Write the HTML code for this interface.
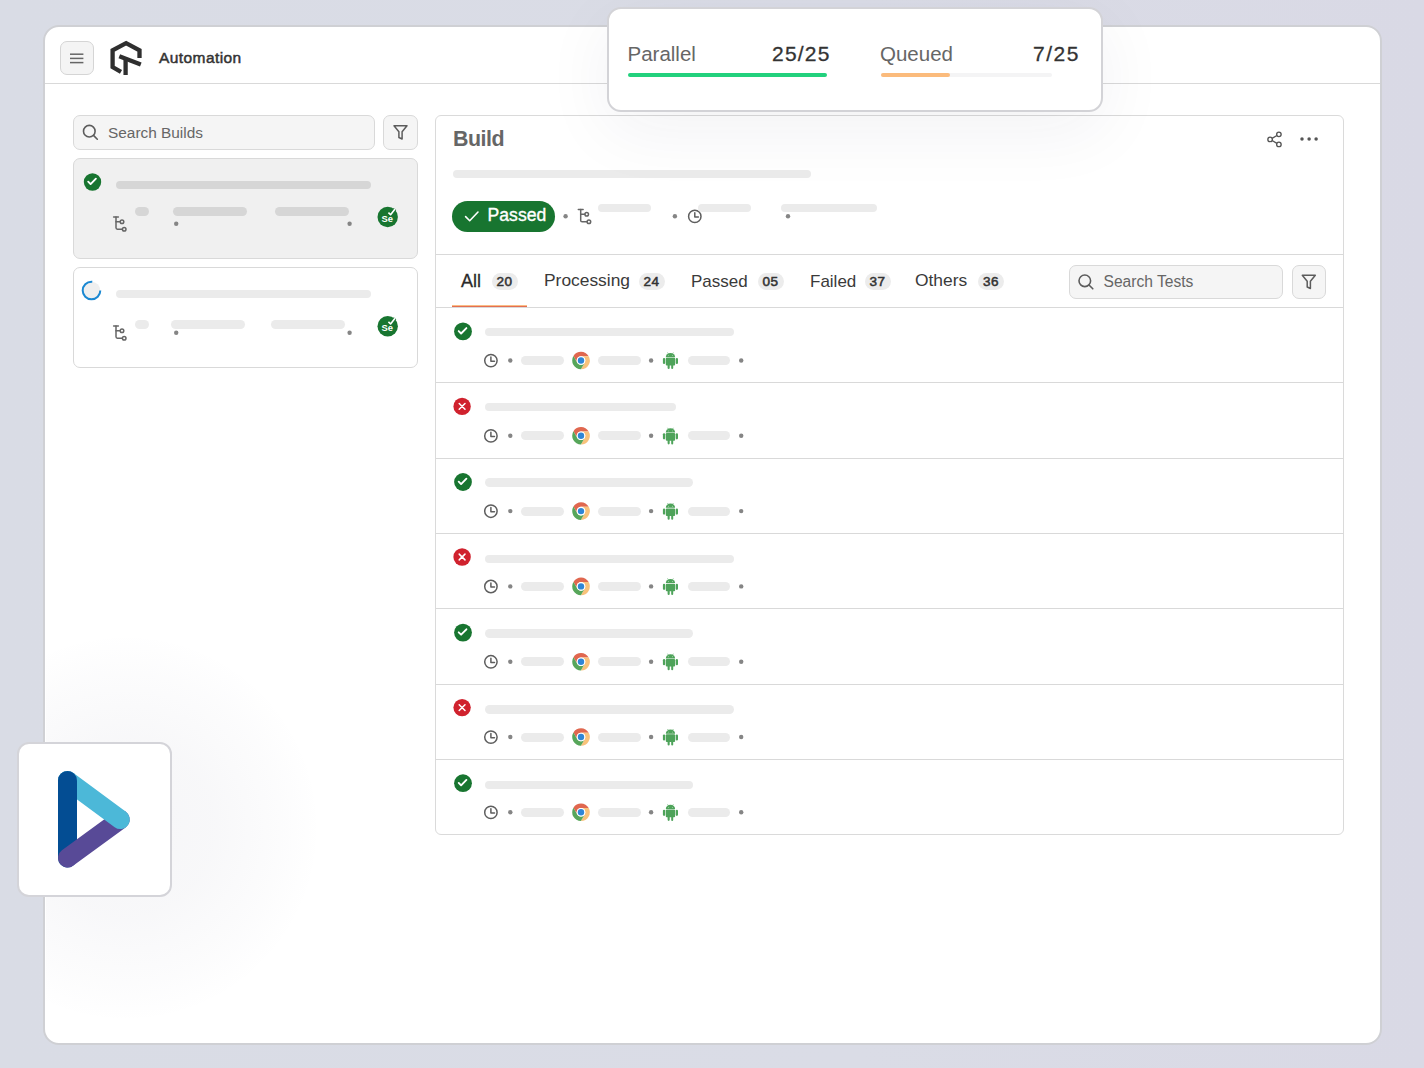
<!DOCTYPE html>
<html><head><meta charset="utf-8">
<style>
*{box-sizing:border-box;margin:0;padding:0}
html,body{width:1424px;height:1068px;overflow:hidden;background:linear-gradient(90deg,#d9dce5 0%,#dadce6 60%,#d9d9e5 100%);font-family:"Liberation Sans",sans-serif;position:relative}
.a{position:absolute}
.t{position:absolute;line-height:1;white-space:nowrap}
.win{left:43px;top:25px;width:1339px;height:1020px;background:#fff;border:2px solid #cfd0d4;border-radius:16px}
.sk{position:absolute;background:#ebebeb;border-radius:5px;height:9px}
.dot{position:absolute;width:4.4px;height:4.4px;border-radius:50%;background:#858585}
.hl{position:absolute;height:1px;background:#d9d9d9}
svg{position:absolute;overflow:visible}
.badge{position:absolute;height:17px;border-radius:9px;background:#ececec;font-size:13.5px;font-weight:400;-webkit-text-stroke:0.55px #333;color:#333;line-height:17px;text-align:center;letter-spacing:0.5px}
</style></head><body>
<div class="a win"></div>
<div class="hl" style="left:45px;top:83px;width:1335px;background:#d9d9d9"></div>
<div class="a" style="left:60px;top:41px;width:34px;height:34px;background:#f4f4f4;border:1px solid #d5d5d5;border-radius:7px"></div>
<svg style="left:0;top:0" width="1" height="1"><g stroke="#666" stroke-width="1.5"><line x1="70" y1="54.2" x2="83.4" y2="54.2"/><line x1="70" y1="58.4" x2="83.4" y2="58.4"/><line x1="70" y1="62.6" x2="83.4" y2="62.6"/></g></svg>
<svg style="left:0;top:0" width="1" height="1"><g fill="none" stroke="#2f2f2f" stroke-width="4.3" stroke-linejoin="miter" stroke-linecap="butt">
<polyline points="121,71.8 112.6,67 112.6,50.3 126.1,43.2 139.5,50.3 139.5,58"/>
<line x1="119.3" y1="56.2" x2="140.8" y2="64.6"/>
<line x1="125.6" y1="58" x2="125.6" y2="75"/></g></svg>
<div class="t" style="left:159px;top:50px;font-size:15.5px;color:#333;letter-spacing:0.42px;-webkit-text-stroke:0.5px #333">Automation</div>
<div class="a" style="left:73px;top:115px;width:302px;height:35px;background:#f5f5f5;border:1px solid #d9d9d9;border-radius:7px"></div>
<svg style="left:0;top:0" width="1" height="1"><g fill="none" stroke="#5c5c5c" stroke-width="1.6"><circle cx="89.3" cy="131.2" r="5.8"/><line x1="93.5" y1="135.4" x2="97.3" y2="139.2" stroke-linecap="round"/></g></svg>
<div class="t" style="left:108px;top:124.5px;font-size:15.4px;color:#666">Search Builds</div>
<div class="a" style="left:383px;top:115px;width:35px;height:35px;background:#f5f5f5;border:1px solid #d9d9d9;border-radius:7px"></div>
<svg style="left:0;top:0" width="1" height="1"><path d="M394,125.8 H407 L402.1,131.8 V139 L398.9,137.5 V131.8 Z" fill="none" stroke="#5c5c5c" stroke-width="1.5" stroke-linejoin="round"/></svg>
<div class="a" style="left:73px;top:158px;width:345px;height:101px;background:#f0f0f0;border:1px solid #d9d9d9;border-radius:7px"></div>
<svg style="left:0;top:0" width="1" height="1"><circle cx="92.5" cy="182" r="8.7" fill="#187530"/><path d="M88.20,181.70 L90.60,184.10 L95.90,178.70" fill="none" stroke="#fff" stroke-width="1.9" stroke-linecap="round" stroke-linejoin="round"/></svg>
<div class="sk" style="left:116px;top:181px;width:255px;height:8px;background:#d6d6d6"></div>
<svg style="left:0;top:0" width="1" height="1"><g fill="none" stroke="#666" stroke-width="1.5" stroke-linecap="round"><path d="M113.60,217.00 H118.40"/><path d="M116.00,217.00 V227.80 Q116.00,229.20 117.40,229.20 H122.40"/><path d="M116.00,221.70 H120.20"/><circle cx="122.00" cy="221.70" r="1.8"/><circle cx="124.20" cy="229.20" r="1.8"/></g></svg>
<div class="sk" style="left:135px;top:207px;width:14px;height:9px;background:#d6d6d6"></div>
<div class="sk" style="left:173px;top:207px;width:74px;height:9px;background:#d6d6d6"></div>
<div class="sk" style="left:275px;top:207px;width:74px;height:9px;background:#d6d6d6"></div>
<svg style="left:0;top:0" width="1" height="1"><circle cx="176.20" cy="223.70" r="2.2" fill="#858585"/></svg>
<svg style="left:0;top:0" width="1" height="1"><circle cx="349.60" cy="223.70" r="2.2" fill="#858585"/></svg>
<svg style="left:0;top:0" width="1" height="1"><circle cx="387.7" cy="217" r="10.2" fill="#187530"/>
<text x="387.20" y="221.50" font-family="Liberation Sans" font-weight="700" font-size="9.4" fill="#fff" text-anchor="middle">Se</text><path d="M388.40,212.60 L390.60,214.70 L395.00,209.00" fill="none" stroke="#187530" stroke-width="3.2" stroke-linejoin="round"/><path d="M388.40,212.60 L390.60,214.70 L395.00,209.00" fill="none" stroke="#fff" stroke-width="1.6" stroke-linejoin="round"/></svg>
<div class="a" style="left:73px;top:267px;width:345px;height:101px;background:#fff;border:1px solid #d9d9d9;border-radius:7px"></div>
<svg style="left:0;top:0" width="1" height="1"><circle cx="91.5" cy="290.5" r="8.8" fill="#efefef"/><circle cx="91.5" cy="290.5" r="8.8" fill="none" stroke="#1a88d2" stroke-width="2" stroke-dasharray="42 13.3" transform="rotate(0 91.5 290.5)"/></svg>
<div class="sk" style="left:116px;top:290px;width:255px;height:8px;background:#ebebeb"></div>
<svg style="left:0;top:0" width="1" height="1"><g fill="none" stroke="#666" stroke-width="1.5" stroke-linecap="round"><path d="M113.60,326.00 H118.40"/><path d="M116.00,326.00 V336.80 Q116.00,338.20 117.40,338.20 H122.40"/><path d="M116.00,330.70 H120.20"/><circle cx="122.00" cy="330.70" r="1.8"/><circle cx="124.20" cy="338.20" r="1.8"/></g></svg>
<div class="sk" style="left:135px;top:320px;width:14px;height:9px;background:#ebebeb"></div>
<div class="sk" style="left:171px;top:320px;width:74px;height:9px;background:#ebebeb"></div>
<div class="sk" style="left:271px;top:320px;width:74px;height:9px;background:#ebebeb"></div>
<svg style="left:0;top:0" width="1" height="1"><circle cx="176.20" cy="332.70" r="2.2" fill="#858585"/></svg>
<svg style="left:0;top:0" width="1" height="1"><circle cx="349.60" cy="332.70" r="2.2" fill="#858585"/></svg>
<svg style="left:0;top:0" width="1" height="1"><circle cx="387.7" cy="326.2" r="10.2" fill="#187530"/>
<text x="387.20" y="330.70" font-family="Liberation Sans" font-weight="700" font-size="9.4" fill="#fff" text-anchor="middle">Se</text><path d="M388.40,321.80 L390.60,323.90 L395.00,318.20" fill="none" stroke="#187530" stroke-width="3.2" stroke-linejoin="round"/><path d="M388.40,321.80 L390.60,323.90 L395.00,318.20" fill="none" stroke="#fff" stroke-width="1.6" stroke-linejoin="round"/></svg>
<div class="a" style="left:435px;top:115px;width:909px;height:720px;background:#fff;border:1px solid #dadada;border-radius:6px"></div>
<div class="t" style="left:453px;top:129px;font-size:21.4px;font-weight:700;color:#666;letter-spacing:-0.45px">Build</div>
<svg style="left:0;top:0" width="1" height="1"><g fill="none" stroke="#555" stroke-width="1.35"><circle cx="1278.9" cy="134.3" r="2.25"/><circle cx="1278.9" cy="144.4" r="2.25"/><circle cx="1270.1" cy="139.4" r="2.25"/><line x1="1272.1" y1="138.3" x2="1276.9" y2="135.5"/><line x1="1272.1" y1="140.5" x2="1276.9" y2="143.3"/></g>
<circle cx="1302" cy="138.9" r="1.75" fill="#555"/><circle cx="1309.1" cy="138.9" r="1.75" fill="#555"/><circle cx="1316.1" cy="138.9" r="1.75" fill="#555"/></svg>
<div class="sk" style="left:453px;top:169.8px;width:358px;height:8px"></div>
<div class="a" style="left:452px;top:201px;width:103px;height:31px;border-radius:16px;background:#187530"></div>
<svg style="left:0;top:0" width="1" height="1"><path d="M465.6,216.6 L469.7,220.7 L478,212" fill="none" stroke="#fff" stroke-width="1.6" stroke-linecap="round" stroke-linejoin="round"/></svg>
<div class="t" style="left:487.6px;top:206.8px;font-size:17.6px;color:#fff;-webkit-text-stroke:0.35px #fff">Passed</div>
<svg style="left:0;top:0" width="1" height="1"><circle cx="565.60" cy="216.30" r="2.2" fill="#858585"/></svg>
<svg style="left:0;top:0" width="1" height="1"><g fill="none" stroke="#666" stroke-width="1.5" stroke-linecap="round"><path d="M578.30,209.60 H583.10"/><path d="M580.70,209.60 V220.40 Q580.70,221.80 582.10,221.80 H587.10"/><path d="M580.70,214.30 H584.90"/><circle cx="586.70" cy="214.30" r="1.8"/><circle cx="588.90" cy="221.80" r="1.8"/></g></svg>
<div class="sk" style="left:598px;top:204px;width:53px;height:8px"></div>
<svg style="left:0;top:0" width="1" height="1"><circle cx="674.90" cy="216.30" r="2.2" fill="#858585"/></svg>
<svg style="left:0;top:0" width="1" height="1"><g fill="none" stroke="#5e5e5e" stroke-width="1.5"><circle cx="694.8" cy="216.4" r="6.2"/><path d="M694.80,212.80 V217.00 H698.40" stroke-linecap="round" stroke-linejoin="round"/></g></svg>
<div class="sk" style="left:698px;top:204px;width:53px;height:8px"></div>
<div class="sk" style="left:781px;top:204px;width:96px;height:8px"></div>
<svg style="left:0;top:0" width="1" height="1"><circle cx="788.00" cy="216.30" r="2.2" fill="#858585"/></svg>
<div class="hl" style="left:436px;top:254px;width:907px"></div>
<div class="t" style="left:461px;top:271.86px;font-size:18px;color:#2b2b2b;-webkit-text-stroke:0.3px #2b2b2b">All</div>
<div class="badge" style="left:491.5px;top:273px;width:26px">20</div>
<div class="t" style="left:544px;top:272.37px;font-size:17.4px;color:#3a3a3a;">Processing</div>
<div class="badge" style="left:638.5px;top:273px;width:26px">24</div>
<div class="t" style="left:691px;top:272.71px;font-size:17px;color:#3a3a3a;">Passed</div>
<div class="badge" style="left:757.5px;top:273px;width:26px">05</div>
<div class="t" style="left:810px;top:272.71px;font-size:17px;color:#3a3a3a;">Failed</div>
<div class="badge" style="left:864.5px;top:273px;width:26px">37</div>
<div class="t" style="left:915px;top:272.37px;font-size:17.4px;color:#3a3a3a;">Others</div>
<div class="badge" style="left:978px;top:273px;width:26px">36</div>
<div class="a" style="left:452px;top:305px;width:74.5px;height:1px;background:#f9bd86"></div>
<div class="a" style="left:452px;top:306px;width:74.5px;height:1px;background:#e56e50"></div>
<div class="hl" style="left:436px;top:307px;width:907px"></div>
<div class="a" style="left:1069px;top:265px;width:214px;height:34px;background:#f5f5f5;border:1px solid #d9d9d9;border-radius:7px"></div>
<svg style="left:0;top:0" width="1" height="1"><g fill="none" stroke="#5c5c5c" stroke-width="1.6"><circle cx="1084.8" cy="280.8" r="5.8"/><line x1="1089" y1="285" x2="1092.8" y2="288.8" stroke-linecap="round"/></g></svg>
<div class="t" style="left:1103.5px;top:274px;font-size:15.6px;color:#666">Search Tests</div>
<div class="a" style="left:1292px;top:265px;width:34px;height:34px;background:#f5f5f5;border:1px solid #d9d9d9;border-radius:7px"></div>
<svg style="left:0;top:0" width="1" height="1"><path d="M1302.3,275.3 H1315.3 L1310.4,281.3 V288.5 L1307.2,287 V281.3 Z" fill="none" stroke="#5c5c5c" stroke-width="1.5" stroke-linejoin="round"/></svg>
<svg style="left:0;top:0" width="1" height="1"><circle cx="463" cy="331.4" r="8.9" fill="#187530"/><path d="M458.70,331.10 L461.10,333.50 L466.40,328.10" fill="none" stroke="#fff" stroke-width="1.9" stroke-linecap="round" stroke-linejoin="round"/></svg>
<div class="sk" style="left:485.3px;top:327.5px;width:249px;height:8.5px"></div>
<svg style="left:0;top:0" width="1" height="1"><g fill="none" stroke="#5e5e5e" stroke-width="1.5"><circle cx="490.9" cy="360.6" r="6.2"/><path d="M490.90,357.00 V361.20 H494.50" stroke-linecap="round" stroke-linejoin="round"/></g></svg>
<svg style="left:0;top:0" width="1" height="1"><circle cx="510.30" cy="360.50" r="2.2" fill="#858585"/></svg>
<div class="sk" style="left:521px;top:356.0px;width:43px;height:9px"></div>
<svg style="left:0;top:0" width="1" height="1"><path d="M573.44,356.00 A8.8,8.8 0 0 1 588.68,356.20 L581.00,356.20 A4.3,4.3 0 0 0 577.28,362.65 Z" fill="#e0674f"/><path d="M588.68,356.20 A8.8,8.8 0 0 1 580.88,369.30 L584.72,362.65 A4.3,4.3 0 0 0 581.00,356.20 Z" fill="#f8c27b"/><path d="M580.88,369.30 A8.8,8.8 0 0 1 573.44,356.00 L577.28,362.65 A4.3,4.3 0 0 0 584.72,362.65 Z" fill="#57a65a"/><circle cx="581" cy="360.5" r="4.3" fill="#fff"/><circle cx="581" cy="360.5" r="3.2" fill="#2f86d6"/></svg>
<div class="sk" style="left:598px;top:356.0px;width:43px;height:9px"></div>
<svg style="left:0;top:0" width="1" height="1"><circle cx="651.10" cy="360.50" r="2.2" fill="#858585"/></svg>
<svg style="left:0;top:0" width="1" height="1"><g fill="#4ea35a"><path d="M665.80,357.20 A4.65,4.2 0 0 1 675.10,357.20 Z"/>
<rect x="665.80" y="357.80" width="9.3" height="7.6" rx="1"/>
<rect x="662.90" y="357.90" width="2.3" height="6.2" rx="1.15"/>
<rect x="675.70" y="357.90" width="2.3" height="6.2" rx="1.15"/>
<rect x="667.60" y="363.50" width="2.1" height="5.6" rx="1.05"/>
<rect x="671.20" y="363.50" width="2.0" height="5.6" rx="1.0"/></g>
<g stroke="#4ea35a" stroke-width="0.6"><line x1="668.30" y1="353.80" x2="667.50" y2="352.50"/><line x1="672.60" y1="353.80" x2="673.40" y2="352.50"/></g>
<circle cx="668.50" cy="355.60" r="0.45" fill="#dff0df"/><circle cx="672.40" cy="355.60" r="0.45" fill="#dff0df"/></svg>
<div class="sk" style="left:688px;top:356.0px;width:42px;height:9px"></div>
<svg style="left:0;top:0" width="1" height="1"><circle cx="741.20" cy="360.50" r="2.2" fill="#858585"/></svg>
<div class="hl" style="left:436px;top:382.3px;width:907px"></div>
<svg style="left:0;top:0" width="1" height="1"><circle cx="462.1" cy="406.40000000000003" r="8.7" fill="#d0222e"/><path d="M459.20,403.50 L465.00,409.30 M465.00,403.50 L459.20,409.30" fill="none" stroke="#fff" stroke-width="1.5" stroke-linecap="round"/></svg>
<div class="sk" style="left:485.3px;top:402.8px;width:191px;height:8.5px"></div>
<svg style="left:0;top:0" width="1" height="1"><g fill="none" stroke="#5e5e5e" stroke-width="1.5"><circle cx="490.9" cy="435.90000000000003" r="6.2"/><path d="M490.90,432.30 V436.50 H494.50" stroke-linecap="round" stroke-linejoin="round"/></g></svg>
<svg style="left:0;top:0" width="1" height="1"><circle cx="510.30" cy="435.80" r="2.2" fill="#858585"/></svg>
<div class="sk" style="left:521px;top:431.3px;width:43px;height:9px"></div>
<svg style="left:0;top:0" width="1" height="1"><path d="M573.44,431.30 A8.8,8.8 0 0 1 588.68,431.50 L581.00,431.50 A4.3,4.3 0 0 0 577.28,437.95 Z" fill="#e0674f"/><path d="M588.68,431.50 A8.8,8.8 0 0 1 580.88,444.60 L584.72,437.95 A4.3,4.3 0 0 0 581.00,431.50 Z" fill="#f8c27b"/><path d="M580.88,444.60 A8.8,8.8 0 0 1 573.44,431.30 L577.28,437.95 A4.3,4.3 0 0 0 584.72,437.95 Z" fill="#57a65a"/><circle cx="581" cy="435.8" r="4.3" fill="#fff"/><circle cx="581" cy="435.8" r="3.2" fill="#2f86d6"/></svg>
<div class="sk" style="left:598px;top:431.3px;width:43px;height:9px"></div>
<svg style="left:0;top:0" width="1" height="1"><circle cx="651.10" cy="435.80" r="2.2" fill="#858585"/></svg>
<svg style="left:0;top:0" width="1" height="1"><g fill="#4ea35a"><path d="M665.80,432.50 A4.65,4.2 0 0 1 675.10,432.50 Z"/>
<rect x="665.80" y="433.10" width="9.3" height="7.6" rx="1"/>
<rect x="662.90" y="433.20" width="2.3" height="6.2" rx="1.15"/>
<rect x="675.70" y="433.20" width="2.3" height="6.2" rx="1.15"/>
<rect x="667.60" y="438.80" width="2.1" height="5.6" rx="1.05"/>
<rect x="671.20" y="438.80" width="2.0" height="5.6" rx="1.0"/></g>
<g stroke="#4ea35a" stroke-width="0.6"><line x1="668.30" y1="429.10" x2="667.50" y2="427.80"/><line x1="672.60" y1="429.10" x2="673.40" y2="427.80"/></g>
<circle cx="668.50" cy="430.90" r="0.45" fill="#dff0df"/><circle cx="672.40" cy="430.90" r="0.45" fill="#dff0df"/></svg>
<div class="sk" style="left:688px;top:431.3px;width:42px;height:9px"></div>
<svg style="left:0;top:0" width="1" height="1"><circle cx="741.20" cy="435.80" r="2.2" fill="#858585"/></svg>
<div class="hl" style="left:436px;top:457.6px;width:907px"></div>
<svg style="left:0;top:0" width="1" height="1"><circle cx="463" cy="482.0" r="8.9" fill="#187530"/><path d="M458.70,481.70 L461.10,484.10 L466.40,478.70" fill="none" stroke="#fff" stroke-width="1.9" stroke-linecap="round" stroke-linejoin="round"/></svg>
<div class="sk" style="left:485.3px;top:478.1px;width:208px;height:8.5px"></div>
<svg style="left:0;top:0" width="1" height="1"><g fill="none" stroke="#5e5e5e" stroke-width="1.5"><circle cx="490.9" cy="511.20000000000005" r="6.2"/><path d="M490.90,507.60 V511.80 H494.50" stroke-linecap="round" stroke-linejoin="round"/></g></svg>
<svg style="left:0;top:0" width="1" height="1"><circle cx="510.30" cy="511.10" r="2.2" fill="#858585"/></svg>
<div class="sk" style="left:521px;top:506.6px;width:43px;height:9px"></div>
<svg style="left:0;top:0" width="1" height="1"><path d="M573.44,506.60 A8.8,8.8 0 0 1 588.68,506.80 L581.00,506.80 A4.3,4.3 0 0 0 577.28,513.25 Z" fill="#e0674f"/><path d="M588.68,506.80 A8.8,8.8 0 0 1 580.88,519.90 L584.72,513.25 A4.3,4.3 0 0 0 581.00,506.80 Z" fill="#f8c27b"/><path d="M580.88,519.90 A8.8,8.8 0 0 1 573.44,506.60 L577.28,513.25 A4.3,4.3 0 0 0 584.72,513.25 Z" fill="#57a65a"/><circle cx="581" cy="511.1" r="4.3" fill="#fff"/><circle cx="581" cy="511.1" r="3.2" fill="#2f86d6"/></svg>
<div class="sk" style="left:598px;top:506.6px;width:43px;height:9px"></div>
<svg style="left:0;top:0" width="1" height="1"><circle cx="651.10" cy="511.10" r="2.2" fill="#858585"/></svg>
<svg style="left:0;top:0" width="1" height="1"><g fill="#4ea35a"><path d="M665.80,507.80 A4.65,4.2 0 0 1 675.10,507.80 Z"/>
<rect x="665.80" y="508.40" width="9.3" height="7.6" rx="1"/>
<rect x="662.90" y="508.50" width="2.3" height="6.2" rx="1.15"/>
<rect x="675.70" y="508.50" width="2.3" height="6.2" rx="1.15"/>
<rect x="667.60" y="514.10" width="2.1" height="5.6" rx="1.05"/>
<rect x="671.20" y="514.10" width="2.0" height="5.6" rx="1.0"/></g>
<g stroke="#4ea35a" stroke-width="0.6"><line x1="668.30" y1="504.40" x2="667.50" y2="503.10"/><line x1="672.60" y1="504.40" x2="673.40" y2="503.10"/></g>
<circle cx="668.50" cy="506.20" r="0.45" fill="#dff0df"/><circle cx="672.40" cy="506.20" r="0.45" fill="#dff0df"/></svg>
<div class="sk" style="left:688px;top:506.6px;width:42px;height:9px"></div>
<svg style="left:0;top:0" width="1" height="1"><circle cx="741.20" cy="511.10" r="2.2" fill="#858585"/></svg>
<div class="hl" style="left:436px;top:532.9px;width:907px"></div>
<svg style="left:0;top:0" width="1" height="1"><circle cx="462.1" cy="557.0" r="8.7" fill="#d0222e"/><path d="M459.20,554.10 L465.00,559.90 M465.00,554.10 L459.20,559.90" fill="none" stroke="#fff" stroke-width="1.5" stroke-linecap="round"/></svg>
<div class="sk" style="left:485.3px;top:554.7px;width:249px;height:8.5px"></div>
<svg style="left:0;top:0" width="1" height="1"><g fill="none" stroke="#5e5e5e" stroke-width="1.5"><circle cx="490.9" cy="586.5" r="6.2"/><path d="M490.90,582.90 V587.10 H494.50" stroke-linecap="round" stroke-linejoin="round"/></g></svg>
<svg style="left:0;top:0" width="1" height="1"><circle cx="510.30" cy="586.40" r="2.2" fill="#858585"/></svg>
<div class="sk" style="left:521px;top:581.9px;width:43px;height:9px"></div>
<svg style="left:0;top:0" width="1" height="1"><path d="M573.44,581.90 A8.8,8.8 0 0 1 588.68,582.10 L581.00,582.10 A4.3,4.3 0 0 0 577.28,588.55 Z" fill="#e0674f"/><path d="M588.68,582.10 A8.8,8.8 0 0 1 580.88,595.20 L584.72,588.55 A4.3,4.3 0 0 0 581.00,582.10 Z" fill="#f8c27b"/><path d="M580.88,595.20 A8.8,8.8 0 0 1 573.44,581.90 L577.28,588.55 A4.3,4.3 0 0 0 584.72,588.55 Z" fill="#57a65a"/><circle cx="581" cy="586.4" r="4.3" fill="#fff"/><circle cx="581" cy="586.4" r="3.2" fill="#2f86d6"/></svg>
<div class="sk" style="left:598px;top:581.9px;width:43px;height:9px"></div>
<svg style="left:0;top:0" width="1" height="1"><circle cx="651.10" cy="586.40" r="2.2" fill="#858585"/></svg>
<svg style="left:0;top:0" width="1" height="1"><g fill="#4ea35a"><path d="M665.80,583.10 A4.65,4.2 0 0 1 675.10,583.10 Z"/>
<rect x="665.80" y="583.70" width="9.3" height="7.6" rx="1"/>
<rect x="662.90" y="583.80" width="2.3" height="6.2" rx="1.15"/>
<rect x="675.70" y="583.80" width="2.3" height="6.2" rx="1.15"/>
<rect x="667.60" y="589.40" width="2.1" height="5.6" rx="1.05"/>
<rect x="671.20" y="589.40" width="2.0" height="5.6" rx="1.0"/></g>
<g stroke="#4ea35a" stroke-width="0.6"><line x1="668.30" y1="579.70" x2="667.50" y2="578.40"/><line x1="672.60" y1="579.70" x2="673.40" y2="578.40"/></g>
<circle cx="668.50" cy="581.50" r="0.45" fill="#dff0df"/><circle cx="672.40" cy="581.50" r="0.45" fill="#dff0df"/></svg>
<div class="sk" style="left:688px;top:581.9px;width:42px;height:9px"></div>
<svg style="left:0;top:0" width="1" height="1"><circle cx="741.20" cy="586.40" r="2.2" fill="#858585"/></svg>
<div class="hl" style="left:436px;top:608.2px;width:907px"></div>
<svg style="left:0;top:0" width="1" height="1"><circle cx="463" cy="632.6" r="8.9" fill="#187530"/><path d="M458.70,632.30 L461.10,634.70 L466.40,629.30" fill="none" stroke="#fff" stroke-width="1.9" stroke-linecap="round" stroke-linejoin="round"/></svg>
<div class="sk" style="left:485.3px;top:629.3px;width:208px;height:8.5px"></div>
<svg style="left:0;top:0" width="1" height="1"><g fill="none" stroke="#5e5e5e" stroke-width="1.5"><circle cx="490.9" cy="661.8000000000001" r="6.2"/><path d="M490.90,658.20 V662.40 H494.50" stroke-linecap="round" stroke-linejoin="round"/></g></svg>
<svg style="left:0;top:0" width="1" height="1"><circle cx="510.30" cy="661.70" r="2.2" fill="#858585"/></svg>
<div class="sk" style="left:521px;top:657.2px;width:43px;height:9px"></div>
<svg style="left:0;top:0" width="1" height="1"><path d="M573.44,657.20 A8.8,8.8 0 0 1 588.68,657.40 L581.00,657.40 A4.3,4.3 0 0 0 577.28,663.85 Z" fill="#e0674f"/><path d="M588.68,657.40 A8.8,8.8 0 0 1 580.88,670.50 L584.72,663.85 A4.3,4.3 0 0 0 581.00,657.40 Z" fill="#f8c27b"/><path d="M580.88,670.50 A8.8,8.8 0 0 1 573.44,657.20 L577.28,663.85 A4.3,4.3 0 0 0 584.72,663.85 Z" fill="#57a65a"/><circle cx="581" cy="661.7" r="4.3" fill="#fff"/><circle cx="581" cy="661.7" r="3.2" fill="#2f86d6"/></svg>
<div class="sk" style="left:598px;top:657.2px;width:43px;height:9px"></div>
<svg style="left:0;top:0" width="1" height="1"><circle cx="651.10" cy="661.70" r="2.2" fill="#858585"/></svg>
<svg style="left:0;top:0" width="1" height="1"><g fill="#4ea35a"><path d="M665.80,658.40 A4.65,4.2 0 0 1 675.10,658.40 Z"/>
<rect x="665.80" y="659.00" width="9.3" height="7.6" rx="1"/>
<rect x="662.90" y="659.10" width="2.3" height="6.2" rx="1.15"/>
<rect x="675.70" y="659.10" width="2.3" height="6.2" rx="1.15"/>
<rect x="667.60" y="664.70" width="2.1" height="5.6" rx="1.05"/>
<rect x="671.20" y="664.70" width="2.0" height="5.6" rx="1.0"/></g>
<g stroke="#4ea35a" stroke-width="0.6"><line x1="668.30" y1="655.00" x2="667.50" y2="653.70"/><line x1="672.60" y1="655.00" x2="673.40" y2="653.70"/></g>
<circle cx="668.50" cy="656.80" r="0.45" fill="#dff0df"/><circle cx="672.40" cy="656.80" r="0.45" fill="#dff0df"/></svg>
<div class="sk" style="left:688px;top:657.2px;width:42px;height:9px"></div>
<svg style="left:0;top:0" width="1" height="1"><circle cx="741.20" cy="661.70" r="2.2" fill="#858585"/></svg>
<div class="hl" style="left:436px;top:683.5px;width:907px"></div>
<svg style="left:0;top:0" width="1" height="1"><circle cx="462.1" cy="707.6" r="8.7" fill="#d0222e"/><path d="M459.20,704.70 L465.00,710.50 M465.00,704.70 L459.20,710.50" fill="none" stroke="#fff" stroke-width="1.5" stroke-linecap="round"/></svg>
<div class="sk" style="left:485.3px;top:705.3px;width:249px;height:8.5px"></div>
<svg style="left:0;top:0" width="1" height="1"><g fill="none" stroke="#5e5e5e" stroke-width="1.5"><circle cx="490.9" cy="737.1" r="6.2"/><path d="M490.90,733.50 V737.70 H494.50" stroke-linecap="round" stroke-linejoin="round"/></g></svg>
<svg style="left:0;top:0" width="1" height="1"><circle cx="510.30" cy="737.00" r="2.2" fill="#858585"/></svg>
<div class="sk" style="left:521px;top:732.5px;width:43px;height:9px"></div>
<svg style="left:0;top:0" width="1" height="1"><path d="M573.44,732.50 A8.8,8.8 0 0 1 588.68,732.70 L581.00,732.70 A4.3,4.3 0 0 0 577.28,739.15 Z" fill="#e0674f"/><path d="M588.68,732.70 A8.8,8.8 0 0 1 580.88,745.80 L584.72,739.15 A4.3,4.3 0 0 0 581.00,732.70 Z" fill="#f8c27b"/><path d="M580.88,745.80 A8.8,8.8 0 0 1 573.44,732.50 L577.28,739.15 A4.3,4.3 0 0 0 584.72,739.15 Z" fill="#57a65a"/><circle cx="581" cy="737.0" r="4.3" fill="#fff"/><circle cx="581" cy="737.0" r="3.2" fill="#2f86d6"/></svg>
<div class="sk" style="left:598px;top:732.5px;width:43px;height:9px"></div>
<svg style="left:0;top:0" width="1" height="1"><circle cx="651.10" cy="737.00" r="2.2" fill="#858585"/></svg>
<svg style="left:0;top:0" width="1" height="1"><g fill="#4ea35a"><path d="M665.80,733.70 A4.65,4.2 0 0 1 675.10,733.70 Z"/>
<rect x="665.80" y="734.30" width="9.3" height="7.6" rx="1"/>
<rect x="662.90" y="734.40" width="2.3" height="6.2" rx="1.15"/>
<rect x="675.70" y="734.40" width="2.3" height="6.2" rx="1.15"/>
<rect x="667.60" y="740.00" width="2.1" height="5.6" rx="1.05"/>
<rect x="671.20" y="740.00" width="2.0" height="5.6" rx="1.0"/></g>
<g stroke="#4ea35a" stroke-width="0.6"><line x1="668.30" y1="730.30" x2="667.50" y2="729.00"/><line x1="672.60" y1="730.30" x2="673.40" y2="729.00"/></g>
<circle cx="668.50" cy="732.10" r="0.45" fill="#dff0df"/><circle cx="672.40" cy="732.10" r="0.45" fill="#dff0df"/></svg>
<div class="sk" style="left:688px;top:732.5px;width:42px;height:9px"></div>
<svg style="left:0;top:0" width="1" height="1"><circle cx="741.20" cy="737.00" r="2.2" fill="#858585"/></svg>
<div class="hl" style="left:436px;top:758.8px;width:907px"></div>
<svg style="left:0;top:0" width="1" height="1"><circle cx="463" cy="783.1999999999999" r="8.9" fill="#187530"/><path d="M458.70,782.90 L461.10,785.30 L466.40,779.90" fill="none" stroke="#fff" stroke-width="1.9" stroke-linecap="round" stroke-linejoin="round"/></svg>
<div class="sk" style="left:485.3px;top:780.5px;width:208px;height:8.5px"></div>
<svg style="left:0;top:0" width="1" height="1"><g fill="none" stroke="#5e5e5e" stroke-width="1.5"><circle cx="490.9" cy="812.4" r="6.2"/><path d="M490.90,808.80 V813.00 H494.50" stroke-linecap="round" stroke-linejoin="round"/></g></svg>
<svg style="left:0;top:0" width="1" height="1"><circle cx="510.30" cy="812.30" r="2.2" fill="#858585"/></svg>
<div class="sk" style="left:521px;top:807.8px;width:43px;height:9px"></div>
<svg style="left:0;top:0" width="1" height="1"><path d="M573.44,807.80 A8.8,8.8 0 0 1 588.68,808.00 L581.00,808.00 A4.3,4.3 0 0 0 577.28,814.45 Z" fill="#e0674f"/><path d="M588.68,808.00 A8.8,8.8 0 0 1 580.88,821.10 L584.72,814.45 A4.3,4.3 0 0 0 581.00,808.00 Z" fill="#f8c27b"/><path d="M580.88,821.10 A8.8,8.8 0 0 1 573.44,807.80 L577.28,814.45 A4.3,4.3 0 0 0 584.72,814.45 Z" fill="#57a65a"/><circle cx="581" cy="812.3" r="4.3" fill="#fff"/><circle cx="581" cy="812.3" r="3.2" fill="#2f86d6"/></svg>
<div class="sk" style="left:598px;top:807.8px;width:43px;height:9px"></div>
<svg style="left:0;top:0" width="1" height="1"><circle cx="651.10" cy="812.30" r="2.2" fill="#858585"/></svg>
<svg style="left:0;top:0" width="1" height="1"><g fill="#4ea35a"><path d="M665.80,809.00 A4.65,4.2 0 0 1 675.10,809.00 Z"/>
<rect x="665.80" y="809.60" width="9.3" height="7.6" rx="1"/>
<rect x="662.90" y="809.70" width="2.3" height="6.2" rx="1.15"/>
<rect x="675.70" y="809.70" width="2.3" height="6.2" rx="1.15"/>
<rect x="667.60" y="815.30" width="2.1" height="5.6" rx="1.05"/>
<rect x="671.20" y="815.30" width="2.0" height="5.6" rx="1.0"/></g>
<g stroke="#4ea35a" stroke-width="0.6"><line x1="668.30" y1="805.60" x2="667.50" y2="804.30"/><line x1="672.60" y1="805.60" x2="673.40" y2="804.30"/></g>
<circle cx="668.50" cy="807.40" r="0.45" fill="#dff0df"/><circle cx="672.40" cy="807.40" r="0.45" fill="#dff0df"/></svg>
<div class="sk" style="left:688px;top:807.8px;width:42px;height:9px"></div>
<svg style="left:0;top:0" width="1" height="1"><circle cx="741.20" cy="812.30" r="2.2" fill="#858585"/></svg>
<div class="a" style="left:606.5px;top:6.5px;width:496px;height:105px;background:#fff;border:2px solid #d3d3d7;border-radius:14px;box-shadow:0 18px 70px rgba(40,40,70,0.06)"></div>
<div class="t" style="left:627.5px;top:43.5px;font-size:20.5px;color:#666">Parallel</div>
<div class="t" style="left:772px;top:43px;font-size:21px;color:#333;letter-spacing:1.2px;-webkit-text-stroke:0.3px #333">25/25</div>
<div class="a" style="left:628px;top:73px;width:199px;height:4px;border-radius:2px;background:#22d17d"></div>
<div class="t" style="left:880px;top:43.5px;font-size:20.5px;color:#666">Queued</div>
<div class="t" style="left:1033px;top:43px;font-size:21px;color:#333;letter-spacing:1.5px;-webkit-text-stroke:0.3px #333">7/25</div>
<div class="a" style="left:881px;top:73px;width:171px;height:4px;border-radius:2px;background:#f4f4f5"></div>
<div class="a" style="left:881px;top:73px;width:69px;height:4px;border-radius:2px;background:#fbbb7c"></div>
<div class="a" style="left:45.5px;top:630px;width:300px;height:400px;background:radial-gradient(circle 195px at 80px 198px, rgba(70,70,110,0.052) 0%, rgba(70,70,110,0.04) 45%, rgba(70,70,110,0.016) 80%, rgba(70,70,110,0) 100%)"></div>
<div class="a" style="left:17px;top:742px;width:155px;height:155px;background:#fff;border:2px solid #d4d4d9;border-radius:12px"></div>
<svg style="left:0;top:0" width="1" height="1"><defs><clipPath id="topc"><rect x="40" y="760" width="60" height="40"/></clipPath></defs>
<g fill="none" stroke-width="19" stroke-linecap="round">
<line x1="67.5" y1="780.5" x2="67.5" y2="858" stroke="#034d93"/>
<line x1="67.5" y1="858" x2="120.3" y2="819.5" stroke="#584a97"/>
<line x1="67.5" y1="780.5" x2="120.3" y2="819.5" stroke="#4cb8d8"/>
<line x1="67.5" y1="780.5" x2="67.5" y2="800" stroke="#034d93" clip-path="url(#topc)"/>
</g></svg>
</body></html>
